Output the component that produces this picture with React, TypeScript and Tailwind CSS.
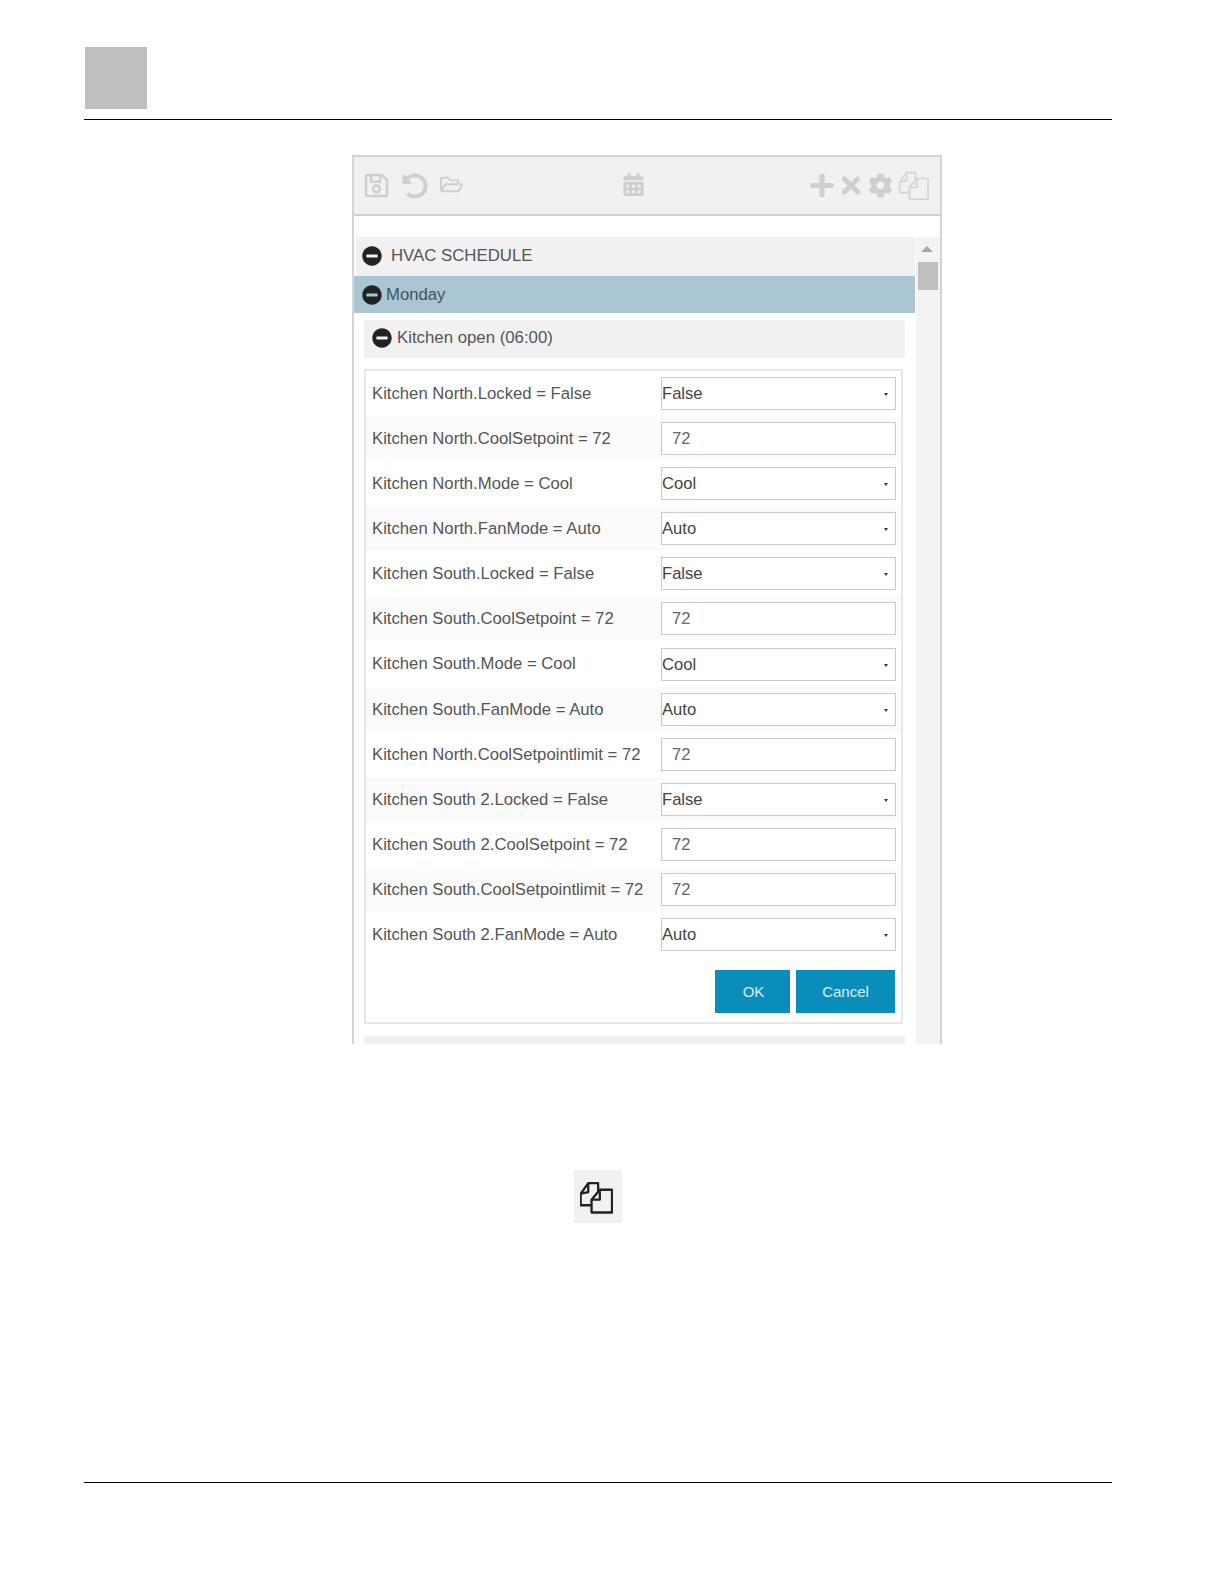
import { FaCalendarAlt, FaCog, FaMinusCircle, FaPlus, FaRegFolderOpen, FaRegSave, FaTimes, FaUndoAlt } from "react-icons/fa"

const rows = [
	{ label: "Kitchen North.Locked = False", value: "False", select: true },
	{ label: "Kitchen North.CoolSetpoint = 72", value: "72" },
	{ label: "Kitchen North.Mode = Cool", value: "Cool", select: true },
	{ label: "Kitchen North.FanMode = Auto", value: "Auto", select: true },
	{ label: "Kitchen South.Locked = False", value: "False", select: true },
	{ label: "Kitchen South.CoolSetpoint = 72", value: "72" },
	{ label: "Kitchen South.Mode = Cool", value: "Cool", select: true },
	{ label: "Kitchen South.FanMode = Auto", value: "Auto", select: true },
	{ label: "Kitchen North.CoolSetpointlimit = 72", value: "72" },
	{ label: "Kitchen South 2.Locked = False", value: "False", select: true },
	{ label: "Kitchen South 2.CoolSetpoint = 72", value: "72" },
	{ label: "Kitchen South.CoolSetpointlimit = 72", value: "72" },
	{ label: "Kitchen South 2.FanMode = Auto", value: "Auto", select: true },
]

function CopyIcon(Props: { className: string; strokeWidth: number }) {
	return (
		<svg viewBox="0 0 100 96" fill="none" stroke="currentColor" strokeWidth={Props.strokeWidth} strokeLinejoin="round" className={Props.className}>
			<path d="M35 70H2V35L25 3H55V28" />
			<path d="M25 3V30L2 35" />
			<path d="M60 23H97V92H35V53Z" />
			<path d="M60 23V53H35" />
		</svg>
	)
}

export default function App() {
	return (
		<div className="relative h-[1584px] w-[1224px] overflow-hidden bg-white font-['Liberation_Sans',Arial,sans-serif] text-[#555]">
			<div className="ml-[84px] mr-[112px] h-[120px] border-b border-black pt-[47px]">
				<div className="ml-px h-[62px] w-[62px] bg-[#bfbfbf]" />
			</div>

			<div className="ml-[352px] mt-[35px] h-[889px] w-[590px] overflow-hidden border-x-2 border-[#d4d4d4]">
				<div className="flex h-[61px] items-center justify-between border-y-2 border-[#d2d2d2] bg-[#f1f1f1] pl-[9px] pr-[11px] text-[#cfcfcf]">
					<div className="flex items-center">
						<FaRegSave className="h-[27px] w-[27px]" />
						<FaUndoAlt className="ml-[12px] h-[26px] w-[26px]" />
						<FaRegFolderOpen className="ml-[12px] mb-[2px] h-[21px] w-[23px]" />
					</div>
					<FaCalendarAlt className="-ml-[6px] mb-[2px] h-[23px] w-[21px]" />
					<div className="flex items-center">
						<FaPlus className="h-[27px] w-[24px]" />
						<FaTimes className="ml-[7px] h-[27px] w-[20px]" />
						<FaCog className="ml-[7px] h-[25px] w-[25px]" />
						<CopyIcon className="ml-[6px] h-[30px] w-[30px] text-[#d4d4d4]" strokeWidth={5.5} />
					</div>
				</div>

				<div className="mt-[21px] flex">
					<div className="w-[561px] shrink-0">
						<div className="ml-[2px] flex h-[39px] items-center bg-[#f1f1f1] pb-[2px] pl-[6px] text-[16.8px] text-[#555]">
							<FaMinusCircle className="h-[20px] w-[20px] text-[#222]" />
							<span className="ml-[9px]">HVAC SCHEDULE</span>
						</div>
						<div className="flex h-[37px] items-center bg-[#a9c6d2] pl-[8px] text-[16.7px] text-[#3f5560]">
							<FaMinusCircle className="h-[20px] w-[20px] text-[#222]" />
							<span className="ml-[4px]">Monday</span>
						</div>
						<div className="ml-[10px] mr-[10px] mt-[7px] flex h-[38px] items-center bg-[#f1f1f1] pb-[2px] pl-[8px] text-[16.8px]">
							<FaMinusCircle className="h-[20px] w-[20px] text-[#222]" />
							<span className="ml-[5px]">Kitchen open (06:00)</span>
						</div>
						<div className="ml-[10px] mr-[12px] mt-[11px] h-[655px] border-2 border-[#e8e8e8] pb-[10px]">
							{rows.map((row, i) => (
								<div key={row.label} className={"flex h-[45.08px] items-center pl-[6px] " + (i % 2 === 1 ? "bg-[#fbfbfb]" : "bg-white")}>
									<span className="w-[289px] shrink-0 whitespace-nowrap text-[16.7px]">{row.label}</span>
									{row.select ? (
										<div className="flex h-[33px] w-[235px] items-center justify-between border border-[#cbcbcb] bg-white pr-[7px] pt-[2px] text-[16.6px] text-[#444]">
											{row.value}
											<span className="h-0 w-0 border-x-[2px] border-t-[3px] border-x-transparent border-t-[#333]" />
										</div>
									) : (
										<div className="flex h-[33px] w-[235px] items-center border border-[#cbcbcb] bg-white pl-[10px] pt-[2px] text-[16.6px] text-[#666]">{row.value}</div>
									)}
								</div>
							))}
							<div className="mr-[6px] mt-[13px] flex justify-end gap-[6px] text-[15px] text-[#dceef5]">
								<div className="flex h-[43px] w-[75px] items-center justify-center bg-[#0a8dbb] pl-[2px] pt-[2px]">OK</div>
								<div className="flex h-[43px] w-[99px] items-center justify-center bg-[#0a8dbb] pt-[2px]">Cancel</div>
							</div>
						</div>
						<div className="ml-[10px] mr-[10px] mt-[12px] h-[20px] bg-[#f1f1f1]" />
					</div>
					<div className="relative ml-[1px] flex-1 self-stretch bg-[#f3f3f3]">
						<div className="ml-[5px] mt-[9px] h-0 w-0 border-x-[6px] border-b-[6px] border-x-transparent border-b-[#a8a8a8]" />
						<div className="ml-[2px] mt-[10px] h-[28px] w-[20px] bg-[#bfbfbf]" />
					</div>
				</div>
			</div>

			<div className="ml-[574px] mt-[126px] flex h-[53px] w-[48px] items-center justify-center bg-[#f1f1f1] pr-[3px] pt-[2px] text-[#222]">
				<CopyIcon className="h-[32px] w-[33px]" strokeWidth={7} />
			</div>

			<div className="ml-[84px] mr-[112px] mt-[259px] h-px bg-black" />
		</div>
	)
}
